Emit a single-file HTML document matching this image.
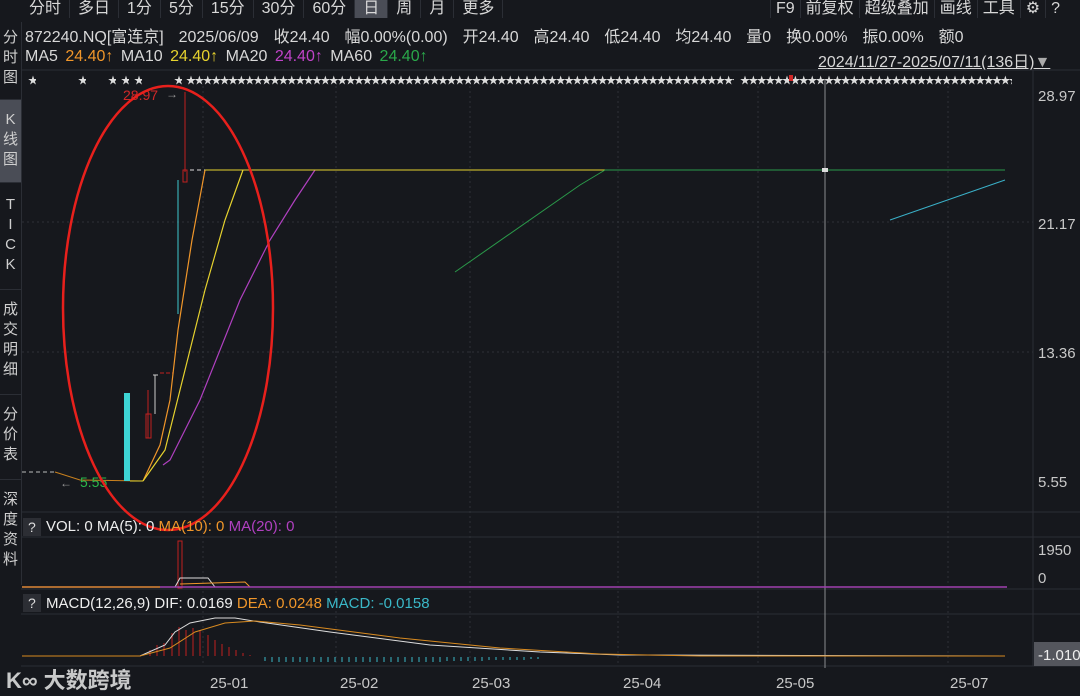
<!DOCTYPE html><html><head><meta charset="utf-8"><style>
body{margin:0;width:1080px;height:696px;background:#16181d;overflow:hidden;font-family:"Liberation Sans","Noto Sans CJK SC",sans-serif;color:#d8d8d8;position:relative}
.a{position:absolute;white-space:nowrap}
.tb{top:0;height:20px;font-size:16px;line-height:18px}
.tb span{display:inline-block;padding:0 8px;border-right:1px solid #2b2e35}
.side{left:0;width:21px;font-size:15px;text-align:center;line-height:20px;color:#cfcfcf;border-right:1px solid #2b2e35}
.side div{border-bottom:1px solid #2b2e35}
.st{position:absolute;top:72px;font-size:10px;letter-spacing:-1.6px;color:#ddd;overflow:hidden;white-space:nowrap}
</style></head><body>
<div class="a tb" style="left:21px;"><span>分时</span><span>多日</span><span>1分</span><span>5分</span><span>15分</span><span>30分</span><span>60分</span><span style="background:#4a4d56">日</span><span>周</span><span>月</span><span>更多</span></div>
<div class="a tb" style="left:770px;"><span style="border-left:1px solid #2b2e35;padding:0 5px">F9</span><span style="padding:0 5px">前复权</span><span style="padding:0 5px">超级叠加</span><span style="padding:0 5px">画线</span><span style="padding:0 5px">工具</span><span style="padding:0 5px">⚙</span><span style="border:0;padding:0 5px">?</span></div>
<div class="a side" style="top:22px">
<div style="height:78px;padding-top:6px;box-sizing:border-box">分<br>时<br>图</div>
<div style="height:83px;background:#4a4d56;padding-top:10px;box-sizing:border-box">K<br>线<br>图</div>
<div style="height:107px;padding-top:12px;box-sizing:border-box">T<br>I<br>C<br>K</div>
<div style="height:105px;padding-top:10px;box-sizing:border-box">成<br>交<br>明<br>细</div>
<div style="height:85px;padding-top:10px;box-sizing:border-box">分<br>价<br>表</div>
<div style="height:105px;padding-top:10px;box-sizing:border-box;border:0">深<br>度<br>资<br>料</div>
</div>
<div class="a" style="left:25px;top:23px;font-size:16px;word-spacing:3px">872240.NQ[富连京] &nbsp;2025/06/09 &nbsp;收24.40 &nbsp;幅0.00%(0.00) &nbsp;开24.40 &nbsp;高24.40 &nbsp;低24.40 &nbsp;均24.40 &nbsp;量0 &nbsp;换0.00% &nbsp;振0.00% &nbsp;额0</div>
<div class="a" style="left:25px;top:48px;font-size:16px;word-spacing:3px">MA5 <span style="color:#f0962a">24.40↑</span> MA10 <span style="color:#e6d22e">24.40↑</span> MA20 <span style="color:#c043c8">24.40↑</span> MA60 <span style="color:#2aa84a">24.40↑</span></div>
<div class="a" style="left:818px;top:48px;font-size:16px;text-decoration:underline">2024/11/27-2025/07/11(136日)<span style="text-decoration:none;color:#aaa">▼</span></div>
<div class="st" style="left:28px">★</div><div class="st" style="left:78px">★</div><div class="st" style="left:108px">★</div><div class="st" style="left:121px">★</div><div class="st" style="left:134px">★</div><div class="st" style="left:174px">★</div>
<div class="st" style="left:186px;width:548px">★★★★★★★★★★★★★★★★★★★★★★★★★★★★★★★★★★★★★★★★★★★★★★★★★★★★★★★★★★★★★★★★★★★★★★★★★★★★★★★★★★★★★★★★★★★★★★★★★★★★</div>
<div class="st" style="left:740px;width:272px">★★★★★★★★★★★★★★★★★★★★★★★★★★★★★★★★★★★★★★★★★★★★★★★★★★★★★★★★★★★★★★★★★★★★★</div>
<svg class="a" style="left:0;top:0" width="1080" height="696">
<g stroke="#2b2e35" stroke-width="1" fill="none">
<line x1="21" y1="70" x2="1080" y2="70"/><line x1="21" y1="512" x2="1080" y2="512"/><line x1="21" y1="537" x2="1080" y2="537"/>
<line x1="21" y1="589" x2="1080" y2="589"/><line x1="21" y1="614" x2="1080" y2="614"/><line x1="21" y1="666" x2="1080" y2="666"/>
<line x1="1033" y1="70" x2="1033" y2="666"/>
</g>
<g stroke="#2e3138" stroke-dasharray="2,3">
<line x1="22" y1="222" x2="1033" y2="222"/><line x1="22" y1="352" x2="1033" y2="352"/>
<line x1="203" y1="86" x2="203" y2="666"/><line x1="336" y1="86" x2="336" y2="666"/><line x1="470" y1="86" x2="470" y2="666"/><line x1="618" y1="86" x2="618" y2="666"/><line x1="758" y1="86" x2="758" y2="666"/><line x1="948" y1="86" x2="948" y2="666"/>
</g>
<line x1="825" y1="80" x2="825" y2="668" stroke="#8a8c90"/>
<rect x="789" y="75" width="4" height="6" fill="#d02828"/>
<g font-size="15" fill="#c8c8c8"><text x="1038" y="101">28.97</text><text x="1038" y="229">21.17</text><text x="1038" y="358">13.36</text><text x="1038" y="487">5.55</text><text x="1038" y="555">1950</text><text x="1038" y="583">0</text>
<text x="210" y="688">25-01</text><text x="340" y="688">25-02</text><text x="472" y="688">25-03</text><text x="623" y="688">25-04</text><text x="776" y="688">25-05</text><text x="950" y="688">25-07</text></g>
<rect x="1034" y="642" width="46" height="24" fill="#54565d"/><text x="1038" y="660" font-size="15" fill="#eee">-1.010</text>
<line x1="22" y1="472" x2="55" y2="472" stroke="#bbb" stroke-dasharray="4,3"/>
<polyline points="55,472 80,480 143,481" stroke="#c8801e" fill="none"/>
<text x="80" y="487" font-size="14" fill="#2bb84a">5.55</text><text x="60" y="487" font-size="12" fill="#999">←</text>
<rect x="124" y="393" width="6" height="88" fill="#3dd4d4"/>
<line x1="130" y1="481" x2="143" y2="481" stroke="#e6d22e"/>
<line x1="148" y1="390" x2="148" y2="438" stroke="#c02020"/><rect x="146" y="414" width="5" height="24" fill="none" stroke="#c02020"/>
<line x1="155" y1="375" x2="155" y2="414" stroke="#ccc"/><line x1="153" y1="375" x2="158" y2="375" stroke="#ccc"/>
<line x1="160" y1="373" x2="173" y2="373" stroke="#c02020" stroke-dasharray="4,2"/>
<line x1="178" y1="180" x2="178" y2="314" stroke="#3dc8d0"/>
<line x1="185" y1="92" x2="185" y2="172" stroke="#c02020"/><rect x="183" y="170" width="4" height="12" fill="none" stroke="#c02020"/>
<text x="123" y="100" font-size="14" fill="#d02828">28.97</text><text x="166" y="98" font-size="12" fill="#999">→</text>
<line x1="190" y1="170" x2="205" y2="170" stroke="#ddd" stroke-dasharray="4,3"/>
<polyline points="143,481 160,445 170,400 178,330 192,240 205,170" stroke="#f0962a" fill="none" stroke-width="1.2"/>
<polyline points="143,481 165,450 180,390 205,290 225,220 243,170" stroke="#e6d22e" fill="none" stroke-width="1.2"/>
<polyline points="163,465 170,460 200,400 240,300 270,240 295,200 315,170" stroke="#b040c0" fill="none" stroke-width="1.2"/>
<line x1="205" y1="170" x2="1005" y2="170" stroke="#e6d22e"/><line x1="605" y1="170" x2="1005" y2="170" stroke="#2a9a4a"/>
<polyline points="455,272 580,185 605,170" stroke="#2a9a4a" fill="none"/>
<polyline points="890,220 1005,180" stroke="#3ab0c8" fill="none"/>
<rect x="822" y="168" width="6" height="4" fill="#ddd"/>
<ellipse cx="168" cy="308" rx="105" ry="222" fill="none" stroke="#e8201c" stroke-width="2.5"/>
<rect x="23" y="518" width="18" height="18" fill="#2c2e34"/><text x="28" y="532" font-size="14" fill="#ddd">?</text>
<text x="46" y="531" font-size="15" fill="#eee">VOL: 0 MA(5): 0 <tspan fill="#f0962a">MA(10): 0</tspan> <tspan fill="#b040c0">MA(20): 0</tspan></text>
<rect x="178" y="541" width="4" height="47" fill="none" stroke="#c02020"/>
<polyline points="175,587 180,578 208,578 215,587" stroke="#ddd" fill="none"/>
<polyline points="180,584 245,582 250,587" stroke="#f0962a" fill="none"/>
<line x1="22" y1="587" x2="1007" y2="587" stroke="#a040b0" stroke-width="1.5"/>
<line x1="22" y1="587" x2="160" y2="587" stroke="#c8801e" stroke-width="1.5"/>
<rect x="23" y="594" width="18" height="18" fill="#2c2e34"/><text x="28" y="608" font-size="14" fill="#ddd">?</text>
<text x="46" y="608" font-size="15" fill="#eee">MACD(12,26,9) DIF: 0.0169 <tspan fill="#f0962a">DEA: 0.0248</tspan> <tspan fill="#3ab8c8">MACD: -0.0158</tspan></text>
<g stroke="#c02020"><line x1="150" y1="656" x2="150" y2="650"/><line x1="157" y1="656" x2="157" y2="645"/><line x1="164" y1="656" x2="164" y2="643"/><line x1="172" y1="656" x2="172" y2="633"/><line x1="179" y1="656" x2="179" y2="627"/><line x1="186" y1="656" x2="186" y2="630"/><line x1="193" y1="656" x2="193" y2="628"/><line x1="200" y1="656" x2="200" y2="630"/><line x1="208" y1="656" x2="208" y2="635"/><line x1="215" y1="656" x2="215" y2="640"/><line x1="222" y1="656" x2="222" y2="644"/><line x1="229" y1="656" x2="229" y2="647"/><line x1="236" y1="656" x2="236" y2="650"/><line x1="243" y1="656" x2="243" y2="653"/><line x1="250" y1="656" x2="250" y2="655"/></g>
<g stroke="#3ab8c8"><path d="M265 657v4M272 657v5M279 657v5M286 657v5M293 657v5M300 657v5M307 657v5M314 657v5M321 657v5M328 657v5M335 657v5M342 657v5M349 657v5M356 657v5M363 657v5M370 657v5M377 657v5M384 657v5M391 657v5M398 657v5M405 657v5M412 657v5M419 657v5M426 657v5M433 657v5M440 657v5M447 657v4M454 657v4M461 657v4M468 657v4M475 657v4M482 657v4M489 657v3M496 657v3M503 657v3M510 657v3M517 657v3M524 657v3M531 657v2M538 657v2"/></g>
<polyline points="22,656 140,656 165,645 175,632 190,623 215,618 235,618 260,622 330,632 430,645 540,652 620,655 1005,656" stroke="#ddd" fill="none"/>
<polyline points="22,656 140,656 170,648 195,632 225,623 255,621 300,625 400,638 500,648 600,654 700,656 1005,656" stroke="#d88a20" fill="none"/>
<text x="6" y="688" font-size="22" font-weight="bold" fill="#e8e8e8" opacity="0.85">K∞ 大数跨境</text>
</svg>
</body></html>
